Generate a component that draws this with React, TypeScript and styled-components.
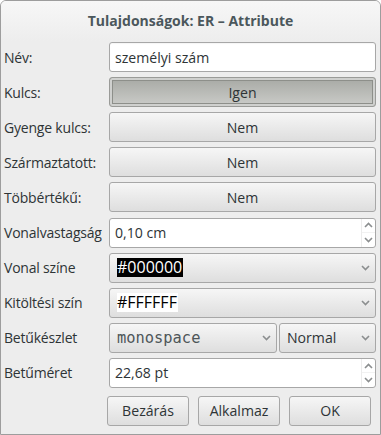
import React from 'react'
import styled, { createGlobalStyle, css } from 'styled-components'

const GlobalStyle = createGlobalStyle`
  html, body {
    margin: 0;
    padding: 0;
    background: #ffffff;
  }
  body {
    font-family: 'Open Sans', 'DejaVu Sans', sans-serif;
    color: #2e3436;
  }
`

const Window = styled.div`
  width: 381px;
  height: 435px;
  box-sizing: border-box;
  border: 1px solid #9d9d9d;
  border-radius: 6px 6px 0 0;
  background: #ededed;
  overflow: hidden;
  display: flex;
  flex-direction: column;
`

const TitleBar = styled.div`
  height: 40px;
  flex: none;
  display: flex;
  align-items: center;
  justify-content: center;
  background: linear-gradient(#f7f7f7, #ededed);
  font-weight: 700;
  font-size: 14px;
  color: #4b575c;
  padding-bottom: 1px;
  box-sizing: border-box;
`

const Form = styled.div`
  display: grid;
  grid-template-columns: 108px 267px;
  grid-auto-rows: 30px;
  row-gap: 5.11px;
  padding: 1px 0 0 0;
`

const Label = styled.div`
  display: flex;
  align-items: center;
  padding-left: 3px;
  font-size: 14px;
  letter-spacing: -0.2px;
  color: #2e3436;
  white-space: nowrap;
`

const field = css`
  box-sizing: border-box;
  height: 100%;
  border: 1px solid #a7a7a7;
  border-radius: 3px;
  font-family: inherit;
  font-size: 14.1px;
  color: #2e3436;
`

const TextBox = styled.div`
  ${field};
  background: #ffffff;
  display: flex;
  align-items: center;
  padding-left: 5px;
  box-shadow: inset 0 1px 1px rgba(0, 0, 0, 0.04);
`

const ToggleButton = styled.div<{ $active?: boolean }>`
  ${field};
  display: flex;
  align-items: center;
  justify-content: center;
  background: linear-gradient(#f6f6f6, #dedede);
  ${({ $active }) =>
    $active &&
    css`
      border-color: #9a9b98;
      background: linear-gradient(#a7a9a4, #cbccc9);
      box-shadow: inset 0 0 0 2px #cfd0ce, inset 0 0 0 3px #8d8f8a;
    `}
`

const SpinBox = styled.div`
  ${field};
  background: #ffffff;
  display: flex;
`

const SpinText = styled.div`
  flex: 1;
  display: flex;
  align-items: center;
  padding-left: 5px;
`

const SpinArrows = styled.div`
  width: 13px;
  border-left: 1px solid #ececec;
  display: flex;
  flex-direction: column;
`

const SpinArrow = styled.div`
  flex: 1;
  display: flex;
  align-items: center;
  justify-content: center;
  & + & {
    border-top: 1px solid #f2f2f2;
  }
`

const Combo = styled.div`
  ${field};
  background: linear-gradient(#f6f6f6, #dedede);
  display: flex;
  align-items: center;
  padding: 0 5px 0 7px;
`

const ComboValue = styled.div<{ $mono?: boolean }>`
  flex: 1;
  display: flex;
  align-items: center;
  ${({ $mono }) =>
    $mono &&
    css`
      font-family: 'DejaVu Sans Mono', monospace;
      font-size: 15.4px;
      color: #4e5659;
      padding-left: 0;
    `}
`

const Swatch = styled.span<{ $bg: string; $fg: string }>`
  display: inline-block;
  height: 19px;
  line-height: 19px;
  padding: 0 1px 0 0;
  background: ${({ $bg }) => $bg};
  color: ${({ $fg }) => $fg};
  font-size: 16px;
`

const FontPair = styled.div`
  display: grid;
  grid-template-columns: 168px 97px;
  column-gap: 2px;
`

const ButtonRow = styled.div`
  display: flex;
  gap: 9px;
  padding: 8px 0 0 106px;
`

const DialogButton = styled.div`
  ${field};
  width: 82px;
  height: 30px;
  display: flex;
  align-items: center;
  justify-content: center;
  background: linear-gradient(#f6f6f6, #dedede);
`

const Chevron = ({ up }: { up?: boolean }) => (
  <svg width="9" height="6" viewBox="0 0 9 6">
    <polyline
      points={up ? '1,5 4.5,1.5 8,5' : '1,1 4.5,4.5 8,1'}
      fill="none"
      stroke="#8b8e8f"
      strokeWidth="1.6"
    />
  </svg>
)

const Spin = ({ value }: { value: string }) => (
  <SpinBox>
    <SpinText>{value}</SpinText>
    <SpinArrows>
      <SpinArrow>
        <Chevron up />
      </SpinArrow>
      <SpinArrow>
        <Chevron />
      </SpinArrow>
    </SpinArrows>
  </SpinBox>
)

export default function App() {
  return (
    <>
      <GlobalStyle />
      <Window>
        <TitleBar>Tulajdonságok: ER – Attribute</TitleBar>
        <Form>
          <Label>Név:</Label>
          <TextBox>személyi szám</TextBox>

          <Label>Kulcs:</Label>
          <ToggleButton $active>Igen</ToggleButton>

          <Label>Gyenge kulcs:</Label>
          <ToggleButton>Nem</ToggleButton>

          <Label>Származtatott:</Label>
          <ToggleButton>Nem</ToggleButton>

          <Label>Többértékű:</Label>
          <ToggleButton>Nem</ToggleButton>

          <Label>Vonalvastagság</Label>
          <Spin value="0,10 cm" />

          <Label>Vonal színe</Label>
          <Combo>
            <ComboValue>
              <Swatch $bg="#000000" $fg="#ffffff">#000000</Swatch>
            </ComboValue>
            <Chevron />
          </Combo>

          <Label>Kitöltési szín</Label>
          <Combo>
            <ComboValue>
              <Swatch $bg="#ffffff" $fg="#000000">#FFFFFF</Swatch>
            </ComboValue>
            <Chevron />
          </Combo>

          <Label>Betűkészlet</Label>
          <FontPair>
            <Combo>
              <ComboValue $mono>monospace</ComboValue>
              <Chevron />
            </Combo>
            <Combo>
              <ComboValue>Normal</ComboValue>
              <Chevron />
            </Combo>
          </FontPair>

          <Label>Betűméret</Label>
          <Spin value="22,68 pt" />
        </Form>
        <ButtonRow>
          <DialogButton>Bezárás</DialogButton>
          <DialogButton>Alkalmaz</DialogButton>
          <DialogButton>OK</DialogButton>
        </ButtonRow>
      </Window>
    </>
  )
}
